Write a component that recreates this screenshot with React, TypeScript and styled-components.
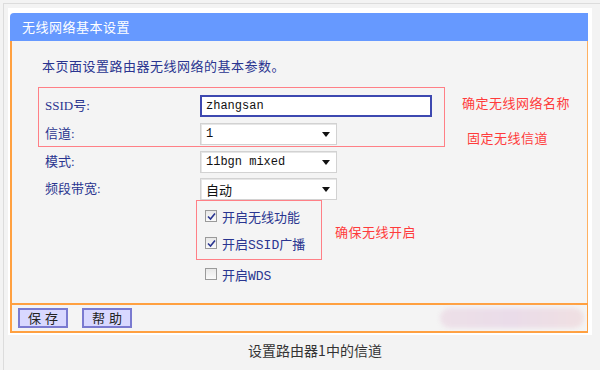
import React from 'react';
import styled, { createGlobalStyle } from 'styled-components';

const GlobalStyle = createGlobalStyle`
  html, body {
    margin: 0;
    padding: 0;
    background: #f3f3f3;
  }
  body {
    font-family: "Noto Sans CJK SC", "Liberation Sans", sans-serif;
  }
`;

const Page = styled.div`
  width: 600px;
  height: 370px;
  background: #f3f3f3;
  overflow: hidden;
  box-sizing: border-box;
  padding: 3px 0 0 3px;
`;

const Frame = styled.div`
  height: 367px;
  border-top: 1px solid #dcdcdc;
  border-left: 1px solid #dcdcdc;
  box-sizing: border-box;
  padding: 4px 0 0 4px;
`;

const Card = styled.div`
  width: 584px;
  height: 327px;
  background: #ffffff;
  box-sizing: border-box;
  padding: 5px 4px 2px 2px;
`;

const Panel = styled.div`
  width: 578px;
  height: 320px;
  display: flex;
  flex-direction: column;
`;

const Header = styled.div`
  height: 28px;
  background: #6699ff;
  border-radius: 4px 0 0 0;
  color: #ffffff;
  font-size: 13px;
  letter-spacing: 0.5px;
  line-height: 28px;
  padding-left: 12px;
`;

const Body = styled.div`
  flex: 1;
  background: #f4f4f4;
  border-left: 2px solid #ffa040;
  border-right: 1px solid #ffb060;
  padding: 16px 0 0 26px;
  display: flex;
  flex-direction: column;
`;

const Intro = styled.div`
  color: #2a3590;
  font-size: 13px;
  letter-spacing: 0.5px;
  line-height: 18px;
  padding-left: 4px;
  margin-bottom: 12px;
`;

const Group = styled.div`
  display: flex;
  align-items: flex-start;
`;

const RedBox = styled.div<{ $width: number; $pad: string; $left?: number }>`
  width: ${(p) => p.$width}px;
  box-sizing: border-box;
  border: 1px solid #ff7f86;
  padding: ${(p) => p.$pad};
  margin-left: ${(p) => p.$left || 0}px;
  display: flex;
  flex-direction: column;
`;

const Notes = styled.div<{ $left: number; $top: number; $gap: number }>`
  margin-left: ${(p) => p.$left}px;
  padding-top: ${(p) => p.$top}px;
  display: flex;
  flex-direction: column;
  gap: ${(p) => p.$gap}px;
`;

const Note = styled.span<{ $shift?: number }>`
  color: #ff3b3b;
  font-size: 13px;
  letter-spacing: 0.5px;
  line-height: 18px;
  margin-left: ${(p) => p.$shift || 0}px;
  white-space: nowrap;
`;

const Row = styled.div<{ $indent?: number; $mt?: number }>`
  display: grid;
  grid-template-columns: 155px auto;
  align-items: center;
  height: 22px;
  margin-left: ${(p) => p.$indent || 0}px;
  margin-top: ${(p) => p.$mt || 0}px;
`;

const Label = styled.span`
  color: #2a3590;
  font-size: 13px;
  line-height: 18px;
  font-family: "Liberation Serif", "Noto Sans CJK SC", serif;
`;

const TextInput = styled.div`
  width: 232px;
  height: 22px;
  box-sizing: border-box;
  border: 2px solid #3d48b0;
  background: #ffffff;
  padding-left: 4px;
  font-family: "Liberation Mono", monospace;
  font-size: 12px;
  line-height: 18px;
  color: #111;
`;

const Select = styled.div<{ $mono?: boolean }>`
  width: 137px;
  height: 22px;
  box-sizing: border-box;
  border: 1px solid #d2d2d2;
  box-shadow: inset 1px 1px 0 #e6e6e6;
  background: #ffffff;
  display: flex;
  align-items: center;
  justify-content: space-between;
  padding: 0 6px 0 5px;
  font-family: ${(p) => (p.$mono ? '"Liberation Mono", monospace' : '"Noto Sans CJK SC", sans-serif')};
  font-size: ${(p) => (p.$mono ? 12 : 13)}px;
  color: #111;
`;

const Arrow = styled.span`
  width: 0;
  height: 0;
  border-left: 4px solid transparent;
  border-right: 4px solid transparent;
  border-top: 5px solid #111;
`;

const CheckRow = styled.div<{ $indent?: number; $mt?: number }>`
  display: flex;
  align-items: center;
  gap: 5px;
  height: 18px;
  margin-left: ${(p) => p.$indent || 0}px;
  margin-top: ${(p) => p.$mt || 0}px;
  color: #2a3590;
  font-size: 13px;
  font-family: "Liberation Mono", "Noto Sans CJK SC", monospace;
`;

const Box = styled.span`
  width: 12px;
  height: 12px;
  box-sizing: border-box;
  border: 1px solid #9a9a9a;
  background: linear-gradient(#e8e8e8, #fafafa);
  display: flex;
  align-items: center;
  justify-content: center;
`;

const Footer = styled.div`
  height: 30px;
  box-sizing: border-box;
  background: #f4f4f4;
  border: 2px solid #ffa040;
  border-right-width: 1px;
  padding: 1px 0 1px 6px;
  display: flex;
  align-items: center;
  gap: 14px;
`;

const Btn = styled.button`
  width: 50px;
  height: 20px;
  box-sizing: border-box;
  border: 2px solid #7a7ad0;
  background: #d8d8ff;
  color: #222;
  font-family: "Noto Sans CJK SC", sans-serif;
  font-size: 13px;
  letter-spacing: 4px;
  padding: 0 0 0 4px;
  line-height: 14px;
`;

const Blur = styled.div`
  margin-left: auto;
  margin-right: 3px;
  width: 144px;
  height: 20px;
  border-radius: 10px;
  background: linear-gradient(90deg, #ede0e8, #eadce9 50%, #f0e0e2);
  filter: blur(2px);
`;

const Caption = styled.div`
  margin-top: 5px;
  padding-left: 22px;
  text-align: center;
  color: #333;
  font-size: 14px;
  line-height: 20px;
`;

const Check: React.FC<{ on: boolean }> = ({ on }) => (
  <Box>
    {on && (
      <svg width="9" height="9" viewBox="0 0 9 9">
        <path d="M1 4.5 L3.5 7 L8 1.5" fill="none" stroke="#2a3590" strokeWidth="1.6" />
      </svg>
    )}
  </Box>
);

export default function App() {
  return (
    <Page>
      <GlobalStyle />
      <Frame>
        <Card>
          <Panel>
            <Header>无线网络基本设置</Header>
            <Body>
              <Intro>本页面设置路由器无线网络的基本参数。</Intro>
              <Group>
                <RedBox $width={407} $pad="7px 0 1px 6px">
                  <Row>
                    <Label>SSID号:</Label>
                    <TextInput>zhangsan</TextInput>
                  </Row>
                  <Row $mt={6}>
                    <Label>信道:</Label>
                    <Select $mono>
                      1<Arrow />
                    </Select>
                  </Row>
                </RedBox>
                <Notes $left={17} $top={7} $gap={17}>
                  <Note>确定无线网络名称</Note>
                  <Note $shift={5}>固定无线信道</Note>
                </Notes>
              </Group>
              <Row $indent={7} $mt={4}>
                <Label>模式:</Label>
                <Select $mono>
                  11bgn mixed<Arrow />
                </Select>
              </Row>
              <Row $indent={7} $mt={5}>
                <Label>频段带宽:</Label>
                <Select>
                  自动<Arrow />
                </Select>
              </Row>
              <Group>
                <RedBox $width={126} $pad="6px 0 7px 8px" $left={158}>
                  <CheckRow>
                    <Check on />
                    开启无线功能
                  </CheckRow>
                  <CheckRow $mt={9}>
                    <Check on />
                    开启SSID广播
                  </CheckRow>
                </RedBox>
                <Notes $left={13} $top={23} $gap={0}>
                  <Note>确保无线开启</Note>
                </Notes>
              </Group>
              <CheckRow $indent={167} $mt={5}>
                <Check on={false} />
                开启WDS
              </CheckRow>
            </Body>
            <Footer>
              <Btn>保存</Btn>
              <Btn>帮助</Btn>
              <Blur />
            </Footer>
          </Panel>
        </Card>
        <Caption>设置路由器1中的信道</Caption>
      </Frame>
    </Page>
  );
}
